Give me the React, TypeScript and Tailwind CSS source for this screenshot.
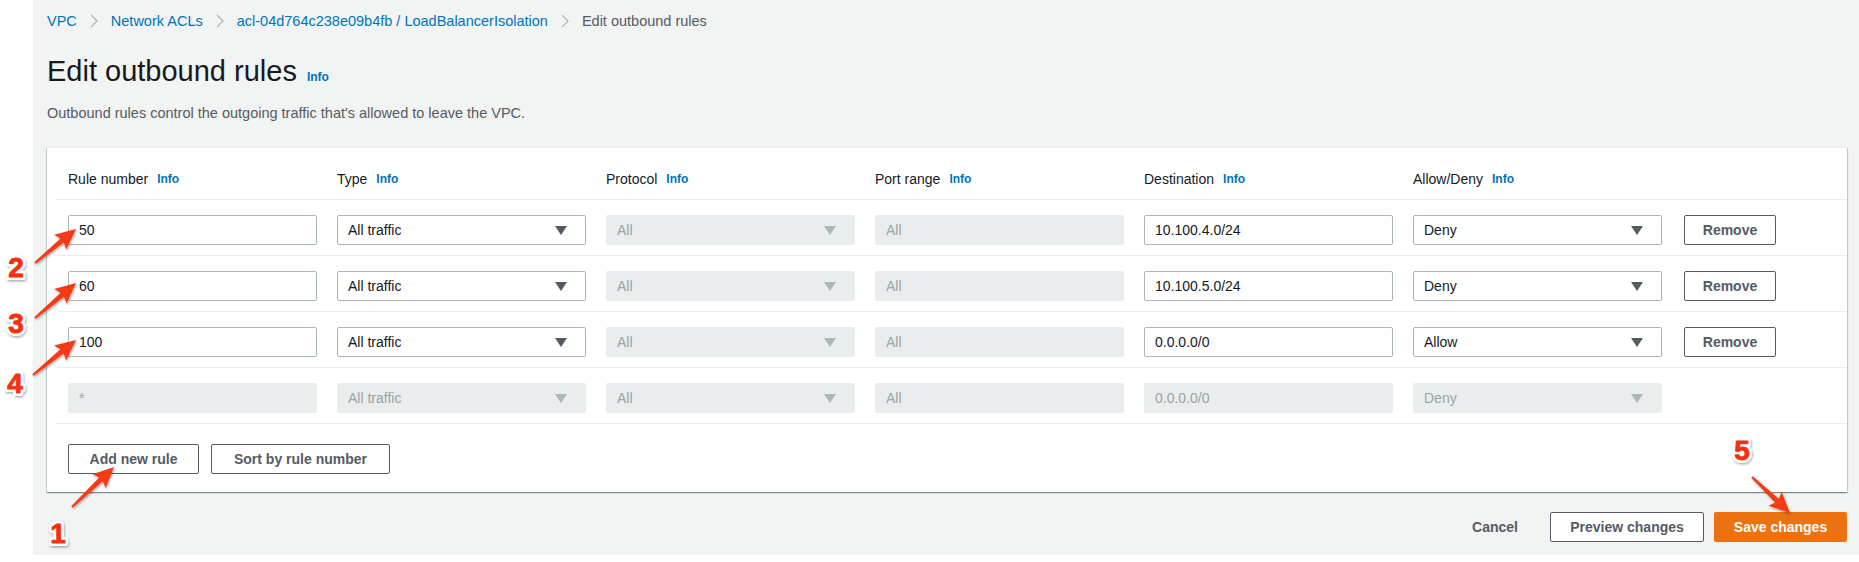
import React from 'react'

const font = "font-['Liberation_Sans',Arial,sans-serif]"

const Chevron = () => (
  <svg width="8" height="14" viewBox="0 0 8 14" className="shrink-0">
    <path d="M1 1 L7 7 L1 13" fill="none" stroke="#aab7b8" strokeWidth="1.2" />
  </svg>
)

const Caret = ({ disabled }: { disabled?: boolean }) => (
  <svg width="12" height="9" viewBox="0 0 12 9" className="shrink-0">
    <path d="M0 0 H12 L6 9 Z" fill={disabled ? '#aab7b8' : '#545b64'} />
  </svg>
)

const Info = () => <span className="text-[12px] font-bold text-[#0073bb]">Info</span>

const Input = ({ value, disabled }: { value: string; disabled?: boolean }) => (
  <div
    className={
      disabled
        ? 'h-[30px] flex items-center px-[10px] rounded-[2px] border border-[#eaeded] bg-[#eaeded] text-[14px] text-[#98a4a5]'
        : 'h-[30px] flex items-center px-[10px] rounded-[2px] border border-[#aab7b8] bg-white text-[14px] text-[#16191f]'
    }
  >
    {value}
  </div>
)

const Select = ({ value, disabled }: { value: string; disabled?: boolean }) => (
  <div
    className={
      disabled
        ? 'h-[30px] flex items-center justify-between pl-[10px] pr-[18px] rounded-[2px] border border-[#eaeded] bg-[#eaeded] text-[14px] text-[#98a4a5]'
        : 'h-[30px] flex items-center justify-between pl-[10px] pr-[18px] rounded-[2px] border border-[#aab7b8] bg-white text-[14px] text-[#16191f]'
    }
  >
    <span>{value}</span>
    <Caret disabled={disabled} />
  </div>
)

const rules = [
  { rule: '50', dest: '10.100.4.0/24', action: 'Deny' },
  { rule: '60', dest: '10.100.5.0/24', action: 'Deny' },
  { rule: '100', dest: '0.0.0.0/0', action: 'Allow' },
]

const headers = ['Rule number', 'Type', 'Protocol', 'Port range', 'Destination', 'Allow/Deny']

const gridCls = 'grid grid-cols-[249px_249px_249px_249px_249px_249px_94px] gap-x-[20px]'

// skitch-like arrow: thin tail widening to a triangular head
function arrowPoints(tx: number, ty: number, px: number, py: number) {
  const dx = px - tx
  const dy = py - ty
  const len = Math.hypot(dx, dy)
  const ux = dx / len
  const uy = dy / len
  const nx = -uy
  const ny = ux
  const hl = 18
  const hw = 9.5
  const bx = px - ux * hl
  const by = py - uy * hl
  const pts = [
    [tx + nx * 1.1, ty + ny * 1.1],
    [bx + nx * 2.6, by + ny * 2.6],
    [bx - ux * 2.5 + nx * hw, by - uy * 2.5 + ny * hw],
    [px, py],
    [bx - ux * 2.5 - nx * hw, by - uy * 2.5 - ny * hw],
    [bx - nx * 2.6, by - ny * 2.6],
    [tx - nx * 1.1, ty - ny * 1.1],
  ]
  return pts.map((p) => p.join(',')).join(' ')
}

const arrows = [
  [35, 263, 76, 229],
  [35, 318, 76, 283],
  [33, 375, 76, 340],
  [72, 507, 114, 467],
  [1752, 477, 1790, 513],
]

const labels = [
  { t: '2', x: 16, y: 277 },
  { t: '3', x: 16, y: 333 },
  { t: '4', x: 15, y: 393 },
  { t: '1', x: 58, y: 543 },
  { t: '5', x: 1742, y: 460 },
]

export default function App() {
  return (
    <div className={`relative flex h-[562px] w-[1859px] bg-white ${font}`}>
      <div className="w-[33px] shrink-0 bg-white" />
      <div className="flex-1 h-[555px] bg-[#f2f3f3] pl-[14px] pr-[12px] pt-[11px]">
        {/* breadcrumb */}
        <div className="flex items-center gap-[13px] text-[14.5px] leading-[20px]">
          <span className="text-[#0073bb]">VPC</span>
          <Chevron />
          <span className="text-[#0073bb]">Network ACLs</span>
          <Chevron />
          <span className="text-[#0073bb]">acl-04d764c238e09b4fb / LoadBalancerIsolation</span>
          <Chevron />
          <span className="text-[#545b64]">Edit outbound rules</span>
        </div>

        <div className="mt-[22px] flex items-baseline gap-[10px]">
          <h1 className="text-[29px] leading-[36px] text-[#16191f]">Edit outbound rules</h1>
          <Info />
        </div>
        <p className="mt-[14px] text-[14.5px] leading-[20px] text-[#545b64]">
          Outbound rules control the outgoing traffic that's allowed to leave the VPC.
        </p>

        {/* card */}
        <div className="mt-[24px] bg-white border-t border-[#eaeded] shadow-[0_1px_1px_0_rgba(0,28,36,0.3),1px_1px_1px_0_rgba(0,28,36,0.15),-1px_1px_1px_0_rgba(0,28,36,0.15)]">
          <div className="ml-[10px] border-b border-[#eaeded] pl-[11px] pt-[21px] pb-[10px]">
            <div className={gridCls}>
              {headers.map((h) => (
                <div key={h} className="flex items-center gap-[9px] text-[14px] leading-[20px] text-[#16191f]">
                  <span>{h}</span>
                  <Info />
                </div>
              ))}
            </div>
          </div>

          {rules.map((r) => (
            <div key={r.rule} className="ml-[10px] border-b border-[#eaeded] pl-[11px] pt-[15px] pb-[10px]">
              <div className={gridCls}>
                <Input value={r.rule} />
                <Select value="All traffic" />
                <Select value="All" disabled />
                <Input value="All" disabled />
                <Input value={r.dest} />
                <Select value={r.action} />
                <button className="ml-[2px] h-[30px] rounded-[2px] border border-[#545b64] bg-white text-[14px] font-bold text-[#545b64]">
                  Remove
                </button>
              </div>
            </div>
          ))}

          <div className="ml-[10px] border-b border-[#eaeded] pl-[11px] pt-[15px] pb-[10px]">
            <div className={gridCls}>
              <Input value="*" disabled />
              <Select value="All traffic" disabled />
              <Select value="All" disabled />
              <Input value="All" disabled />
              <Input value="0.0.0.0/0" disabled />
              <Select value="Deny" disabled />
              <div />
            </div>
          </div>

          <div className="flex gap-[12px] pl-[21px] pt-[20px] pb-[18px]">
            <button className="h-[30px] w-[131px] rounded-[2px] border border-[#545b64] bg-white text-[14px] font-bold text-[#545b64]">
              Add new rule
            </button>
            <button className="h-[30px] w-[179px] rounded-[2px] border border-[#545b64] bg-white text-[14px] font-bold text-[#545b64]">
              Sort by rule number
            </button>
          </div>
        </div>

        {/* footer */}
        <div className="mt-[20px] flex items-center justify-end">
          <button className="h-[30px] px-[20px] text-[14px] font-bold text-[#545b64]">Cancel</button>
          <button className="ml-[12px] h-[30px] w-[154px] rounded-[2px] border border-[#545b64] bg-white text-[14px] font-bold text-[#545b64]">
            Preview changes
          </button>
          <button className="ml-[10px] h-[30px] w-[133px] rounded-[2px] bg-[#ec7211] text-[14px] font-bold text-white">
            Save changes
          </button>
        </div>
      </div>

      {/* annotations */}
      <svg className="pointer-events-none absolute inset-0" width="1859" height="562">
        <defs>
          <filter id="sh" x="-30%" y="-30%" width="160%" height="160%">
            <feDropShadow dx="0.8" dy="1.4" stdDeviation="1.1" floodColor="#000" floodOpacity="0.35" />
          </filter>
        </defs>
        {arrows.map((a, i) => (
          <polygon key={i} points={arrowPoints(a[0], a[1], a[2], a[3])} fill="#f43a17" filter="url(#sh)" />
        ))}
        {labels.map((l) => (
          <g key={l.t} fontFamily="'Liberation Sans', Arial, sans-serif" fontWeight="bold" fontSize="28" textAnchor="middle">
            <text x={l.x} y={l.y} fill="#ffffff" stroke="#ffffff" strokeWidth="6" strokeLinejoin="round" filter="url(#sh)">
              {l.t}
            </text>
            <text x={l.x} y={l.y} fill="#f4300f" stroke="#f4300f" strokeWidth="0.9" strokeLinejoin="round">
              {l.t}
            </text>
          </g>
        ))}
      </svg>
    </div>
  )
}
